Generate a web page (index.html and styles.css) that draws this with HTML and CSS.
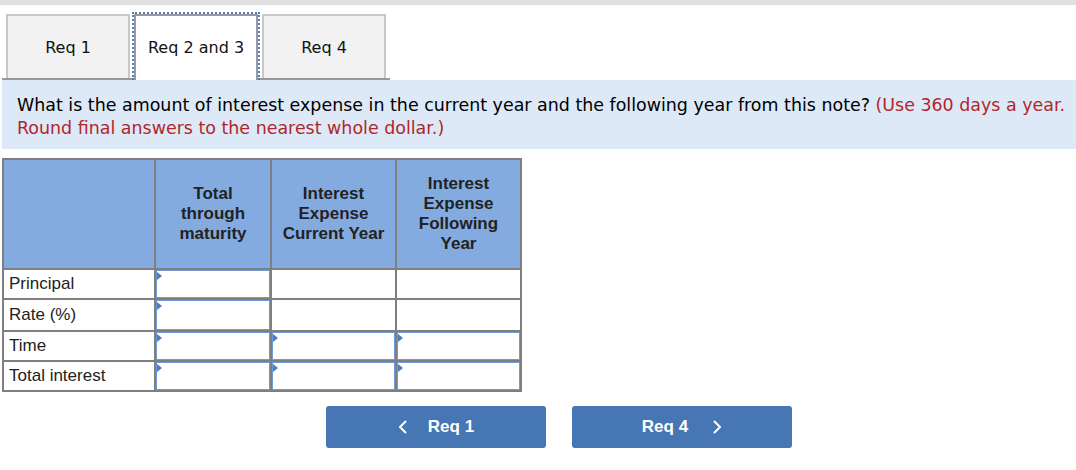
FILE: index.html
```html
<!DOCTYPE html>
<html>
<head>
<meta charset="utf-8">
<link rel="stylesheet" href="styles.css">
</head>
<body>
<div class="topbar"></div>
<div class="tabs">
  <div class="tab">Req 1</div>
  <div class="tab active">Req 2 and 3</div>
  <div class="tab">Req 4</div>
</div>
<div class="question">
  What is the amount of interest expense in the current year and the following year from this note? <span class="hint">(Use 360 days a year. Round final answers to the nearest whole dollar.)</span>
</div>
<table class="grid">
  <thead>
    <tr>
      <th class="c1"></th>
      <th class="c2">Total<br>through<br>maturity</th>
      <th class="c3">Interest<br>Expense<br>Current Year</th>
      <th class="c4">Interest<br>Expense<br>Following<br>Year</th>
    </tr>
  </thead>
  <tbody>
    <tr>
      <td class="label">Principal</td>
      <td class="in"><div class="box"></div></td>
      <td></td>
      <td></td>
    </tr>
    <tr class="tall">
      <td class="label">Rate (%)</td>
      <td class="in"><div class="box"></div></td>
      <td></td>
      <td></td>
    </tr>
    <tr>
      <td class="label">Time</td>
      <td class="in"><div class="box"></div></td>
      <td class="in"><div class="box"></div></td>
      <td class="in"><div class="box"></div></td>
    </tr>
    <tr>
      <td class="label">Total interest</td>
      <td class="in"><div class="box"></div></td>
      <td class="in"><div class="box"></div></td>
      <td class="in"><div class="box"></div></td>
    </tr>
  </tbody>
</table>
<div class="nav">
  <button class="btn"><svg class="chev" width="10" height="16" viewBox="0 0 10 16"><path d="M8 2 L2 8 L8 14" fill="none" stroke="#fff" stroke-width="2"/></svg><span class="btxt">Req 1</span></button>
  <button class="btn"><span class="btxt">Req 4</span><svg class="chev right" width="10" height="16" viewBox="0 0 10 16"><path d="M2 2 L8 8 L2 14" fill="none" stroke="#fff" stroke-width="2"/></svg></button>
</div>
</body>
</html>
```

FILE: styles.css
```css
html, body {
  margin: 0;
  padding: 0;
  background: #fff;
}

.topbar {
  height: 5px;
  background: #e0e0e0;
}

.tabs {
  display: flex;
  width: 384px;
  margin: 9px 0 0 2px;
  padding-left: 4px;
  border-bottom: 2px solid #999;
}

.tab {
  box-sizing: border-box;
  width: 124px;
  height: 64px;
  margin-right: 4px;
  border: 2px solid #c8c8c8;
  border-bottom: none;
  background: #f2f2f2;
  font-family: "DejaVu Sans", Verdana, sans-serif;
  font-size: 16px;
  color: #111;
  display: flex;
  align-items: center;
  justify-content: center;
}

.tab.active {
  position: relative;
  background: #fff;
  border-color: #999;
  height: 66px;
  margin-bottom: -2px;
  padding-bottom: 2px;
}

.tab.active::after {
  content: "";
  position: absolute;
  left: -4px;
  right: -4px;
  top: -4px;
  bottom: 0;
  border: 2px dotted #4a7fc1;
  border-bottom: none;
}

.question {
  margin-left: 2px;
  background: #dde9f7;
  padding: 14px 2px 9px 15px;
  font-family: "DejaVu Sans", Verdana, sans-serif;
  font-size: 17.45px;
  line-height: 23px;
  color: #000;
}

.hint {
  color: #b0272b;
}

.grid {
  margin: 9px 0 0 2px;
  border-collapse: collapse;
  font-family: "Liberation Sans", Arial, sans-serif;
  font-size: 17px;
  color: #222;
}

.grid th, .grid td {
  border: 2px solid #7f7f7f;
  padding: 0;
}

.grid th {
  background: #84abe0;
  height: 108px;
  font-weight: bold;
  line-height: 20px;
  text-align: center;
  vertical-align: middle;
}

.c1 { width: 150px; }
.c2 { width: 114px; }
.c3 { width: 123px; }
.c4 { width: 123px; }

.grid td {
  height: 28px;
  background: #fff;
}

.grid tr.tall td {
  height: 30px;
}

.grid td.label {
  padding-left: 5px;
  text-align: left;
}

.grid td.in {
  padding: 0;
}

.box {
  position: relative;
  box-sizing: border-box;
  height: 28px;
  border: 1px solid #6f9ad6;
  background: #fff;
}

.tall .box {
  height: 30px;
}

.box::before {
  content: "";
  position: absolute;
  left: 0;
  top: 1px;
  border-top: 4px solid transparent;
  border-bottom: 4px solid transparent;
  border-left: 5px solid #4a7fc1;
}

.nav {
  display: flex;
  gap: 26px;
  margin: 14px 0 0 326px;
}

.btn {
  width: 220px;
  height: 42px;
  border: none;
  border-radius: 3px;
  background: #4676b4;
  color: #fff;
  font-family: "Liberation Sans", Arial, sans-serif;
  font-weight: bold;
  font-size: 17px;
  display: flex;
  align-items: center;
  justify-content: center;
  padding: 0;
}

.chev {
  margin-right: 20px;
}

.chev.right {
  margin-left: 24px;
  margin-right: 0;
}
```
